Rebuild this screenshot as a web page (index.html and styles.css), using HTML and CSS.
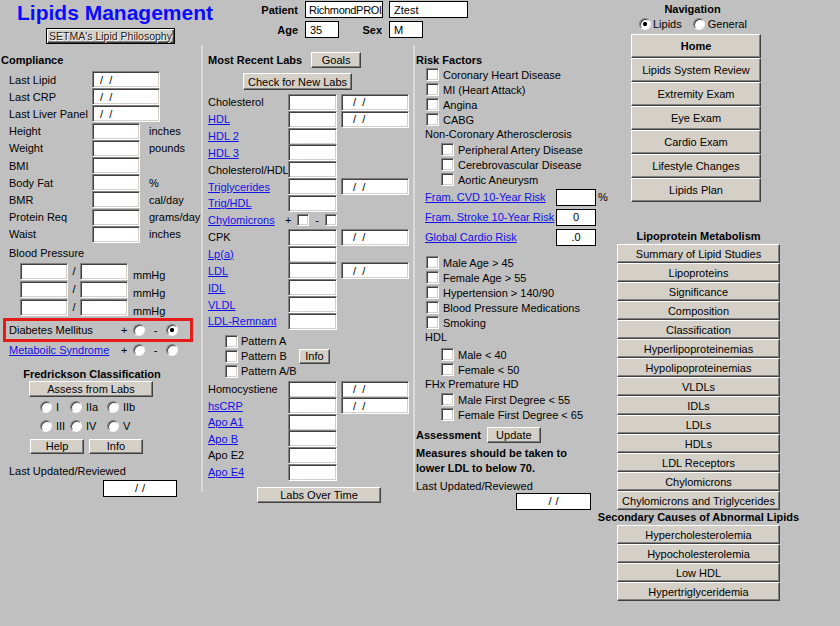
FILE: index.html
```html
<!DOCTYPE html>
<html lang="en">
<head>
<meta charset="utf-8">
<title>Lipids Management</title>
<link rel="stylesheet" href="styles.css">
</head>
<body>
<div class="page">
  <div class="main">
    <header class="header">
      <div class="brand">
        <h1 class="title">Lipids Management</h1>
        <button class="btn philo">SETMA's Lipid Philosophy</button>
      </div>
      <div class="patient">
        <div class="prow prow1">
          <span class="plabel">Patient</span>
          <input class="flatbox pname" value="RichmondPROI" readonly>
          <input class="flatbox pfirst" value="Ztest" readonly>
        </div>
        <div class="prow prow2">
          <span class="plabel">Age</span>
          <input class="flatbox psmall" value="35" readonly>
          <span class="plabel sexlabel">Sex</span>
          <input class="flatbox psmall" value="M" readonly>
        </div>
      </div>
    </header>

    <div class="cols">
      <!-- Column 1 -->
      <section class="col col1">
        <h2 class="sec compliance-h">Compliance</h2>
        <div class="frows">
          <div class="frow"><span class="flabel">Last Lipid</span><input class="tb wide date1" value="/  /" readonly></div>
          <div class="frow"><span class="flabel">Last CRP</span><input class="tb wide date1" value="/  /" readonly></div>
          <div class="frow"><span class="flabel">Last Liver Panel</span><input class="tb wide date1" value="/  /" readonly></div>
          <div class="frow"><span class="flabel">Height</span><input class="tb" readonly><span class="unit">inches</span></div>
          <div class="frow"><span class="flabel">Weight</span><input class="tb" readonly><span class="unit">pounds</span></div>
          <div class="frow"><span class="flabel">BMI</span><input class="tb" readonly></div>
          <div class="frow"><span class="flabel">Body Fat</span><input class="tb" readonly><span class="unit">%</span></div>
          <div class="frow"><span class="flabel">BMR</span><input class="tb" readonly><span class="unit">cal/day</span></div>
          <div class="frow"><span class="flabel">Protein Req</span><input class="tb" readonly><span class="unit">grams/day</span></div>
          <div class="frow"><span class="flabel">Waist</span><input class="tb" readonly><span class="unit">inches</span></div>
        </div>
        <div class="bp-label">Blood Pressure</div>
        <div class="bprows">
          <div class="bprow"><input class="tb" readonly><span class="slash">/</span><input class="tb" readonly><span class="mm">mmHg</span></div>
          <div class="bprow"><input class="tb" readonly><span class="slash">/</span><input class="tb" readonly><span class="mm">mmHg</span></div>
          <div class="bprow"><input class="tb" readonly><span class="slash">/</span><input class="tb" readonly><span class="mm">mmHg</span></div>
        </div>
        <div class="redbox">
          <span class="yn-label">Diabetes Mellitus</span>
          <span class="plus">+</span><span class="radio"></span>
          <span class="minus">-</span><span class="radio on"></span>
        </div>
        <div class="yn-row">
          <a class="yn-label link" href="#">Metaboilc Syndrome</a>
          <span class="plus">+</span><span class="radio"></span>
          <span class="minus">-</span><span class="radio"></span>
        </div>
        <h2 class="sec fred-h">Fredrickson Classification</h2>
        <button class="btn assess">Assess from Labs</button>
        <div class="fgrid">
          <span class="ropt"><span class="radio"></span>I</span>
          <span class="ropt"><span class="radio"></span>IIa</span>
          <span class="ropt"><span class="radio"></span>IIb</span>
          <span class="ropt"><span class="radio"></span>III</span>
          <span class="ropt"><span class="radio"></span>IV</span>
          <span class="ropt"><span class="radio"></span>V</span>
        </div>
        <div class="hibtns">
          <button class="btn">Help</button>
          <button class="btn">Info</button>
        </div>
        <div class="lu-label">Last Updated/Reviewed</div>
        <div class="lu-box lu1">/ /</div>
      </section>

      <!-- Column 2 -->
      <section class="col col2">
        <div class="labs-head">
          <h2 class="sec">Most Recent Labs</h2>
          <button class="btn goals">Goals</button>
        </div>
        <button class="btn check">Check for New Labs</button>
        <div class="lrows">
          <div class="lrow"><span class="llabel">Cholesterol</span><input class="tb" readonly><input class="tb date" value="/  /" readonly></div>
          <div class="lrow"><a class="llabel link" href="#">HDL</a><input class="tb" readonly><input class="tb date" value="/  /" readonly></div>
          <div class="lrow"><a class="llabel link" href="#">HDL 2</a><input class="tb" readonly></div>
          <div class="lrow"><a class="llabel link" href="#">HDL 3</a><input class="tb" readonly></div>
          <div class="lrow"><span class="llabel">Cholesterol/HDL</span><input class="tb" readonly></div>
          <div class="lrow"><a class="llabel link" href="#">Triglycerides</a><input class="tb" readonly><input class="tb date" value="/  /" readonly></div>
          <div class="lrow"><a class="llabel link" href="#">Trig/HDL</a><input class="tb" readonly></div>
          <div class="lrow"><a class="llabel chylo link" href="#">Chylomicrons</a><span class="plus">+</span><span class="cb small"></span><span class="cminus">-</span><span class="cb small"></span></div>
          <div class="lrow"><span class="llabel">CPK</span><input class="tb" readonly><input class="tb date" value="/  /" readonly></div>
          <div class="lrow"><a class="llabel link" href="#">Lp(a)</a><input class="tb" readonly></div>
          <div class="lrow"><a class="llabel link" href="#">LDL</a><input class="tb" readonly><input class="tb date" value="/  /" readonly></div>
          <div class="lrow"><a class="llabel link" href="#">IDL</a><input class="tb" readonly></div>
          <div class="lrow"><a class="llabel link" href="#">VLDL</a><input class="tb" readonly></div>
          <div class="lrow"><a class="llabel link" href="#">LDL-Remnant</a><input class="tb" readonly></div>
        </div>
        <div class="patterns">
          <div class="pat"><span class="cb"></span><span>Pattern A</span></div>
          <div class="pat"><span class="cb"></span><span class="patb">Pattern B</span><button class="btn info2">Info</button></div>
          <div class="pat"><span class="cb"></span><span>Pattern A/B</span></div>
        </div>
        <div class="lrows2">
          <div class="lrow b"><span class="llabel">Homocystiene</span><input class="tb" readonly><input class="tb date" value="/  /" readonly></div>
          <div class="lrow b"><a class="llabel link" href="#">hsCRP</a><input class="tb" readonly><input class="tb date" value="/  /" readonly></div>
          <div class="lrow b"><a class="llabel link" href="#">Apo A1</a><input class="tb" readonly></div>
          <div class="lrow b"><a class="llabel link" href="#">Apo B</a><input class="tb" readonly></div>
          <div class="lrow b"><span class="llabel">Apo E2</span><input class="tb" readonly></div>
          <div class="lrow b"><a class="llabel link" href="#">Apo E4</a><input class="tb" readonly></div>
        </div>
        <button class="btn overtime">Labs Over Time</button>
      </section>

      <!-- Column 3 -->
      <section class="col col3">
        <h2 class="sec risk-h">Risk Factors</h2>
        <div class="rf"><span class="cb"></span><span>Coronary Heart Disease</span></div>
        <div class="rf"><span class="cb"></span><span>MI (Heart Attack)</span></div>
        <div class="rf"><span class="cb"></span><span>Angina</span></div>
        <div class="rf"><span class="cb"></span><span>CABG</span></div>
        <div class="rf-text">Non-Coronary Atherosclerosis</div>
        <div class="rf ind"><span class="cb"></span><span>Peripheral Artery Disease</span></div>
        <div class="rf ind"><span class="cb"></span><span>Cerebrovascular Disease</span></div>
        <div class="rf ind"><span class="cb"></span><span>Aortic Aneurysm</span></div>
        <div class="fram"><a class="link framlink" href="#">Fram. CVD 10-Year Risk</a><span class="fbox"></span><span class="pct">%</span></div>
        <div class="fram"><a class="link framlink" href="#">Fram. Stroke 10-Year Risk</a><span class="fbox">0</span></div>
        <div class="fram"><a class="link framlink" href="#">Global Cardio Risk</a><span class="fbox">.0</span></div>
        <div class="rf gap1"><span class="cb"></span><span>Male Age &gt; 45</span></div>
        <div class="rf"><span class="cb"></span><span>Female Age &gt; 55</span></div>
        <div class="rf"><span class="cb"></span><span>Hypertension &gt; 140/90</span></div>
        <div class="rf"><span class="cb"></span><span>Blood Pressure Medications</span></div>
        <div class="rf"><span class="cb"></span><span>Smoking</span></div>
        <div class="rf-text">HDL</div>
        <div class="rf ind gap2"><span class="cb"></span><span>Male &lt; 40</span></div>
        <div class="rf ind"><span class="cb"></span><span>Female &lt; 50</span></div>
        <div class="rf-text">FHx Premature HD</div>
        <div class="rf ind"><span class="cb"></span><span>Male First Degree &lt; 55</span></div>
        <div class="rf ind"><span class="cb"></span><span>Female First Degree &lt; 65</span></div>
        <div class="assess-row">
          <h2 class="sec">Assessment</h2>
          <button class="btn update">Update</button>
        </div>
        <p class="measures">Measures should be taken to<br>lower LDL to below 70.</p>
        <div class="lu-label lu3">Last Updated/Reviewed</div>
        <div class="lu-box lu3box">/ /</div>
      </section>
    </div>
  </div>

  <nav class="nav">
    <div class="nav-sec1">
      <h2 class="sec nav-title">Navigation</h2>
      <div class="nav-radios">
        <span class="radio on"></span><span class="nr-label">Lipids</span>
        <span class="radio nr-gen"></span><span class="nr-label2">General</span>
      </div>
      <div class="navbtns">
        <button class="btn navbtn home">Home</button>
        <button class="btn navbtn">Lipids System Review</button>
        <button class="btn navbtn">Extremity Exam</button>
        <button class="btn navbtn">Eye Exam</button>
        <button class="btn navbtn">Cardio Exam</button>
        <button class="btn navbtn">Lifestyle Changes</button>
        <button class="btn navbtn">Lipids Plan</button>
      </div>
    </div>
    <div class="nav-sec2">
      <h2 class="sec lp-title">Lipoprotein Metabolism</h2>
      <button class="btn lpbtn">Summary of Lipid Studies</button>
      <button class="btn lpbtn">Lipoproteins</button>
      <button class="btn lpbtn">Significance</button>
      <button class="btn lpbtn">Composition</button>
      <button class="btn lpbtn">Classification</button>
      <button class="btn lpbtn">Hyperlipoproteinemias</button>
      <button class="btn lpbtn">Hypolipoproteinemias</button>
      <button class="btn lpbtn">VLDLs</button>
      <button class="btn lpbtn">IDLs</button>
      <button class="btn lpbtn">LDLs</button>
      <button class="btn lpbtn">HDLs</button>
      <button class="btn lpbtn">LDL Receptors</button>
      <button class="btn lpbtn">Chylomicrons</button>
      <button class="btn lpbtn">Chylomicrons and Triglycerides</button>
      <h2 class="sec lp-title sc-title">Secondary Causes of Abnormal Lipids</h2>
      <button class="btn lpbtn">Hypercholesterolemia</button>
      <button class="btn lpbtn">Hypocholesterolemia</button>
      <button class="btn lpbtn">Low HDL</button>
      <button class="btn lpbtn">Hypertriglyceridemia</button>
    </div>
  </nav>
</div>
</body>
</html>
```

FILE: styles.css
```css
* { box-sizing: border-box; }
html, body { margin: 0; padding: 0; }
body {
  background: #c0c0c0;
  font: 11px/14px "Liberation Sans", Arial, sans-serif;
  color: #000;
  width: 840px;
  height: 626px;
  overflow: hidden;
}
.page { display: flex; width: 840px; height: 626px; }
.main { width: 600px; flex: none; }
.nav { width: 240px; flex: none; }

/* shared controls */
.btn {
  font: 11px "Liberation Sans", Arial, sans-serif;
  color: #000;
  background: #d4d0c8;
  border: 1px solid;
  border-color: #fff #404040 #404040 #fff;
  box-shadow: inset -1px -1px #808080;
  padding: 0;
  margin: 0;
  white-space: nowrap;
  flex: none;
}
.tb {
  display: block;
  flex: none;
  width: 48px;
  height: 17px;
  margin: 0;
  padding: 0 0 0 6px;
  background: #fff;
  border: 1px solid;
  border-color: #808080 #fff #fff #808080;
  box-shadow: inset 1px 1px #404040, inset -1px -1px #d4d0c8;
  font: 11px "Liberation Sans", Arial, sans-serif;
  color: #000;
  outline: none;
}
.flatbox {
  display: block;
  flex: none;
  height: 17px;
  margin: 0;
  padding: 0 0 0 4px;
  background: #fff;
  border: 1px solid #000;
  font: 11px "Liberation Sans", Arial, sans-serif;
  color: #000;
  outline: none;
}
.radio {
  display: inline-block;
  flex: none;
  width: 12px;
  height: 12px;
  border-radius: 50%;
  background: #fff;
  border: 1px solid;
  border-color: #808080 #f4f4f4 #f4f4f4 #808080;
  box-shadow: inset 1px 1px #404040;
}
.radio.on { background: radial-gradient(circle at 50% 50%, #000 0 1.8px, #fff 2.4px); }
.cb {
  display: inline-block;
  flex: none;
  width: 13px;
  height: 13px;
  background: #fff;
  border: 1px solid;
  border-color: #808080 #fff #fff #808080;
  box-shadow: inset 1px 1px #404040, inset -1px -1px #d4d0c8;
}
.cb.small { width: 12px; height: 12px; }
.link { color: #1010e8; text-decoration: underline; }
.sec { margin: 0; font-size: 11px; font-weight: bold; line-height: 14px; }

/* header */
.header { display: flex; height: 45px; }
.brand { width: 240px; flex: none; display: flex; flex-direction: column; align-items: flex-start; }
.title {
  margin: 0 0 0 17px;
  font-size: 21px;
  line-height: 25px;
  font-weight: bold;
  color: #0a0aff;
}
.philo {
  margin: 3px 0 0 46px;
  width: 129px;
  height: 16px;
  border: 1px solid #000;
  box-shadow: inset 1px 1px #fff, inset -1px -1px #404040, inset -2px -2px #808080;
  color: #202020;
  text-shadow: 1px 1px 0 #fff;
  font-size: 10.5px;
}
.patient { display: flex; flex-direction: column; }
.prow { display: flex; align-items: center; height: 17px; }
.prow1 { margin-top: 1px; }
.prow2 { margin-top: 3px; }
.plabel { width: 58px; text-align: right; font-weight: bold; margin-right: 7px; flex: none; }
.pname { width: 78px; padding-left: 3px; letter-spacing: -0.3px; }
.pfirst { width: 79px; margin-left: 6px; }
.psmall { width: 34px; }
.sexlabel { width: 43px; }

/* columns */
.cols { display: flex; }
.col { height: 447px; flex: none; }
.col1 { width: 201px; }
.col2 { width: 212px; border-left: 2px solid #dadada; padding-left: 5px; }
.col3 { width: 187px; border-left: 2px solid #dadada; padding-left: 1px; }

/* column 1 */
.compliance-h { margin-top: 8px; padding-left: 1px; }
.frows { margin-top: 4px; padding-left: 9px; }
.frow { display: flex; align-items: center; height: 17.2px; }
.flabel { width: 83px; flex: none; white-space: nowrap; }
.tb.wide { width: 68px; }
.tb.date1 { padding-left: 7px; }
.unit { margin-left: 9px; white-space: nowrap; }
.bp-label { margin: 3px 0 0 9px; line-height: 14px; }
.bprows { margin-top: 3px; padding-left: 20px; }
.bprow { display: flex; height: 18px; }
.slash { width: 12px; text-align: center; line-height: 17px; }
.mm { margin-left: 5px; padding-top: 5px; }
.redbox {
  display: flex;
  align-items: center;
  margin: 1px 0 0 3px;
  width: 190px;
  height: 24px;
  border: 3px solid #e41b17;
  padding-left: 3px;
}
.yn-row { display: flex; align-items: center; height: 16px; padding-left: 9px; }
.yn-label { width: 112px; flex: none; white-space: nowrap; }
.plus { width: 12px; flex: none; }
.minus { width: 21px; flex: none; text-align: center; }
.fred-h { margin-top: 10px; width: 184px; text-align: center; line-height: 13px; }
.assess { display: block; margin-left: 29px; width: 124px; height: 16px; }
.fgrid {
  margin: 1px 0 0 40px;
  display: grid;
  grid-template-columns: 30px 37px 40px;
  grid-auto-rows: 19px;
  align-items: center;
}
.ropt { display: flex; align-items: center; gap: 4px; }
.hibtns { display: flex; gap: 5px; margin: 3px 0 0 30px; }
.hibtns .btn { width: 54px; height: 15px; }
.lu-label { margin: 10px 0 0 9px; line-height: 14px; }
.lu-box {
  margin: 2px 0 0 103px;
  width: 74px;
  height: 17px;
  border: 1px solid #000;
  background: #fff;
  text-align: center;
  line-height: 15px;
  word-spacing: 1px;
}

/* column 2 */
.labs-head { display: flex; align-items: center; gap: 9px; margin-top: 7px; height: 16px; }
.goals { width: 50px; height: 16px; }
.check { display: block; margin: 5px 0 0 35px; width: 109px; height: 17px; }
.lrows { margin-top: 4px; }
.lrow { display: flex; align-items: center; height: 16.85px; }
.lrow.b { height: 16.6px; }
.llabel { width: 80px; flex: none; white-space: nowrap; }
.llabel.chylo { width: 77px; }
.lrow .tb { width: 49px; }
.lrow .tb.date { width: 68px; margin-left: 4px; padding-left: 11px; }
.cminus { width: 16px; flex: none; text-align: center; }
.patterns { margin-top: 4px; padding-left: 17px; }
.pat { display: flex; align-items: center; gap: 3px; height: 15px; }
.patb { width: 55px; flex: none; }
.info2 { width: 31px; height: 15px; }
.lrows2 { margin-top: 2px; }
.overtime { display: block; margin: 7px 0 0 49px; width: 124px; height: 16px; }

/* column 3 */
.risk-h { margin-top: 8px; }
.rf { display: flex; align-items: center; gap: 4px; height: 15px; padding-left: 10px; white-space: nowrap; }
.rf.ind { padding-left: 25px; }
.rf.gap1 { margin-top: 8px; }
.rf.gap2 { margin-top: 2px; }
.rf-text { padding-left: 9px; height: 15px; line-height: 15px; white-space: nowrap; }
.fram { display: flex; align-items: center; height: 20px; padding-left: 9px; white-space: nowrap; }
.framlink { width: 131px; flex: none; }
.fbox {
  flex: none;
  width: 40px;
  height: 17px;
  border: 1px solid #000;
  background: #fff;
  text-align: center;
  line-height: 15px;
}
.pct { margin-left: 2px; }
.assess-row { display: flex; align-items: center; gap: 6px; margin: 5px 0 0 0; height: 16px; }
.update { width: 54px; height: 16px; }
.measures { margin: 3px 0 0 0; font-weight: bold; line-height: 15px; white-space: nowrap; }
.lu3 { margin: 3px 0 0 0; }
.lu3box { margin: 0 0 0 100px; width: 75px; }

/* navigation */
.nav-sec1 { margin-left: 31px; width: 130px; display: flex; flex-direction: column; }
.nav-title { margin-top: 2px; text-align: center; padding-right: 7px; }
.nav-radios { display: flex; align-items: center; height: 14px; margin-top: 1px; padding-left: 8px; }
.nr-label { margin-left: 2px; }
.nr-gen { margin-left: 11px; }
.nr-label2 { margin-left: 3px; }
.navbtns { display: flex; flex-direction: column; margin-top: 3px; }
.navbtn { width: 130px; height: 24px; }
.navbtn.home { font-weight: bold; }
.nav-sec2 { margin: 27px 0 0 17px; width: 163px; display: flex; flex-direction: column; align-items: center; }
.lp-title { line-height: 15px; white-space: nowrap; text-align: center; }
.lpbtn { width: 163px; height: 19px; }
```
